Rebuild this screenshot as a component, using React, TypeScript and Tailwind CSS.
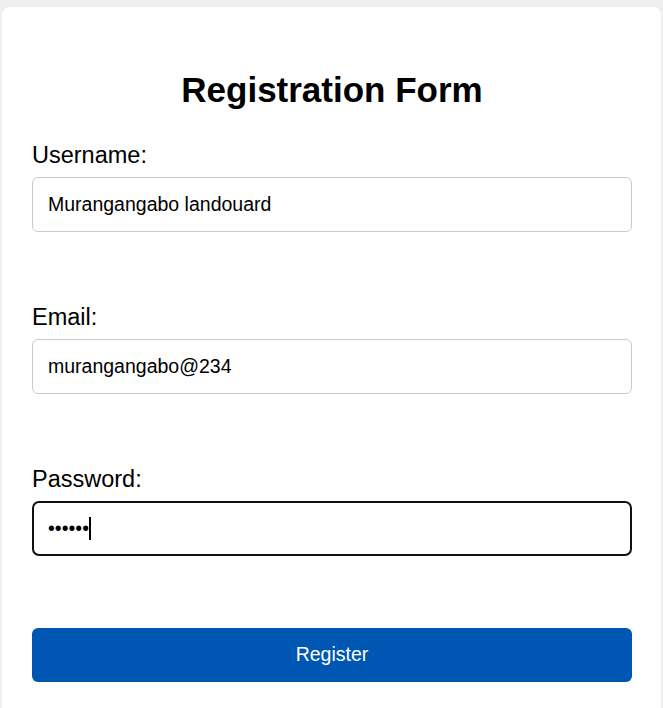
import React from 'react';

const font = { fontFamily: '"Liberation Sans", Arial, sans-serif' };

interface FieldProps {
  label: string;
  value: string;
  type?: string;
}

const Field: React.FC<FieldProps> = ({ label, value, type = 'text' }) => (
  <div className="mb-[72px]">
    <label className="block text-[23.5px] leading-[26px] text-black mb-[9px]">{label}</label>
    <input
      type={type}
      readOnly
      value={value}
      className="block w-full h-[55px] rounded-[6px] border border-[#cccccc] bg-white pl-[15px] text-[19.5px] text-black outline-none"
      style={font}
    />
  </div>
);

const App: React.FC = () => {
  return (
    <div className="min-h-screen bg-[#efefef] pt-[7px] overflow-hidden" style={font}>
      <div className="ml-[2px] w-[659px] min-h-[720px] rounded-t-[8px] bg-white pt-[63px] pl-[30px] pr-[29px]">
        <h2 className="text-center text-[35px] leading-[40px] font-bold text-black">Registration Form</h2>
        <form className="mt-[32px]" onSubmit={(e) => e.preventDefault()}>
          <Field label="Username:" value="Murangangabo landouard" />
          <Field label="Email:" value="murangangabo@234" type="email" />
          <div className="mb-[72px]">
            <label className="block text-[23.5px] leading-[26px] text-black mb-[9px]">Password:</label>
            <div className="flex items-center w-full h-[55px] rounded-[7px] border-2 border-[#111111] bg-white pl-[14px] text-[19.5px] text-black">
              <span>••••••</span>
              <span className="inline-block w-[2px] h-[23px] bg-black" />
            </div>
          </div>
          <button
            type="submit"
            className="block w-full h-[54px] rounded-[6px] bg-[#0056b3] text-white text-[19.5px]"
            style={font}
          >
            Register
          </button>
        </form>
      </div>
    </div>
  );
};

export default App;
